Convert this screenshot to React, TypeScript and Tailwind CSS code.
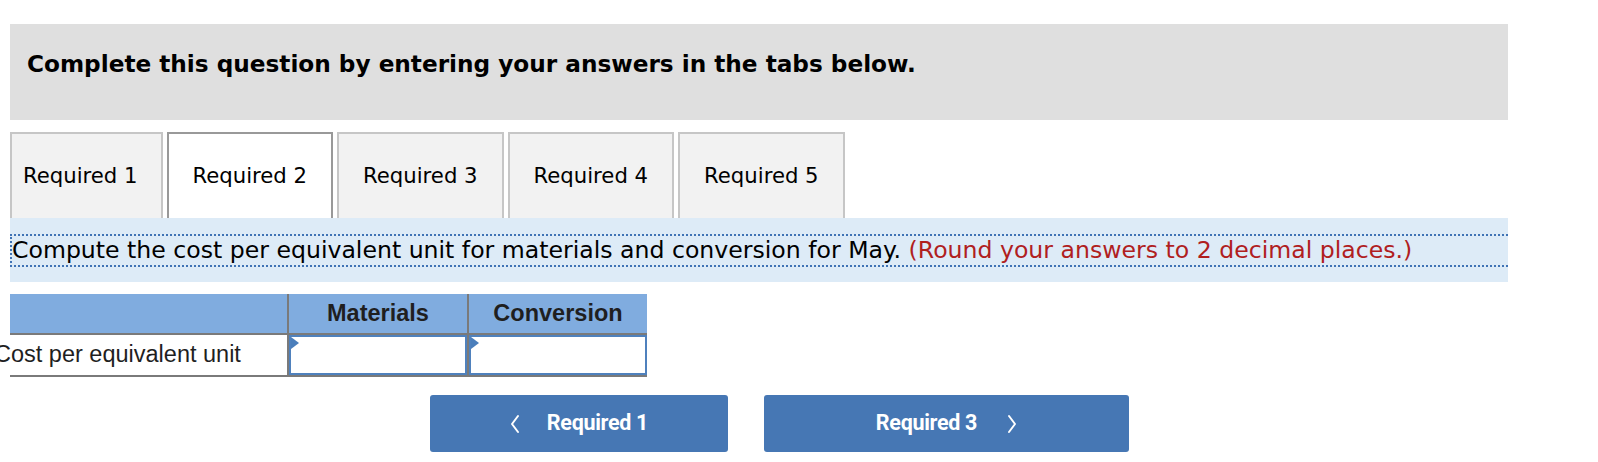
import React from 'react'

// 上部のタブ一覧（Required 2 が選択中）
const TABS = ['Required 1', 'Required 2', 'Required 3', 'Required 4', 'Required 5']
const ACTIVE = 1

function Chevron({ dir }: { dir: 'left' | 'right' }) {
  return (
    <svg width="10" height="20" viewBox="0 0 10 20" fill="none">
      <polyline
        points={dir === 'left' ? '8,2 2,10 8,18' : '2,2 8,10 2,18'}
        stroke="white"
        strokeWidth="2"
        strokeLinecap="round"
        strokeLinejoin="round"
      />
    </svg>
  )
}

function AnswerCell() {
  return (
    <div className="relative h-full border-l-2 border-[#7a7a7a]">
      <div className="h-full border-2 border-[#4f81bd] bg-white" />
      {/* 入力欄左上の小さな三角 */}
      <div className="absolute left-[2px] top-[2px] h-0 w-0 border-y-[6px] border-l-[8px] border-y-transparent border-l-[#4a7ebb]" />
    </div>
  )
}

export default function App() {
  return (
    <div className="min-h-[462px] w-[1598px] overflow-hidden bg-white pt-[24px] font-['DejaVu_Sans',Verdana,sans-serif]">
      <div className="ml-[10px] w-[1498px]">
        {/* 見出し */}
        <div className="h-[96px] bg-[#dfdfdf] pl-[17px] pt-[26px]">
          <h1 className="text-[23.2px] font-bold leading-[28px] text-black">
            Complete this question by entering your answers in the tabs below.
          </h1>
        </div>

        {/* タブ */}
        <div className="mt-[12px] flex gap-[4px]">
          {TABS.map((t, i) => (
            <div
              key={t}
              className={
                'flex h-[86px] items-center border-2 border-b-0 text-[21.2px] text-black ' +
                (i === 0 ? 'pl-[11px] pr-[23px] ' : 'px-[24px] ') +
                (i === ACTIVE ? 'border-[#999999] bg-white' : 'border-[#c6c6c6] bg-[#f2f2f2]')
              }
            >
              {t}
            </div>
          ))}
        </div>

        {/* 指示文 */}
        <div className="bg-[#ddebf7] pb-[15px] pt-[16px]">
          <div className="whitespace-nowrap border-y-2 border-l-2 border-dotted border-[#3f73b5] text-[23.6px] leading-[29px] text-black">
            Compute the cost per equivalent unit for materials and conversion for May.{' '}
            <span className="text-[#b0201e]">(Round your answers to 2 decimal places.)</span>
          </div>
        </div>

        {/* 入力表 */}
        <div className="mt-[12px] w-[637px] font-['Liberation_Sans',Arial,sans-serif] text-[23.5px]">
          <div className="grid h-[41px] grid-cols-[277px_180px_180px] border-b-2 border-[#7a7a7a] bg-[#80acdf] font-bold text-[#1f1f1f]">
            <div />
            <div className="flex items-center justify-center border-l-2 border-[#7a7a7a]">Materials</div>
            <div className="flex items-center justify-center border-l-2 border-[#7a7a7a]">Conversion</div>
          </div>
          <div className="grid h-[42px] grid-cols-[277px_180px_180px] border-b-2 border-[#7a7a7a] text-[#1f1f1f]">
            <div className="flex items-center overflow-visible whitespace-nowrap">
              <span className="ml-[-16px]">Cost per equivalent unit</span>
            </div>
            <AnswerCell />
            <AnswerCell />
          </div>
        </div>

        {/* 前後タブへのボタン */}
        <div className="ml-[420px] mt-[18px] flex gap-[36px] font-['Roboto',sans-serif] text-[21.5px] font-bold tracking-[-0.3px] text-white">
          <button className="flex h-[57px] w-[298px] items-center justify-center gap-[27px] rounded-[3px] bg-[#4677b4]">
            <Chevron dir="left" />
            <span>Required 1</span>
          </button>
          <button className="flex h-[57px] w-[365px] items-center justify-center gap-[30px] rounded-[3px] bg-[#4677b4]">
            <span>Required 3</span>
            <Chevron dir="right" />
          </button>
        </div>
      </div>
    </div>
  )
}
